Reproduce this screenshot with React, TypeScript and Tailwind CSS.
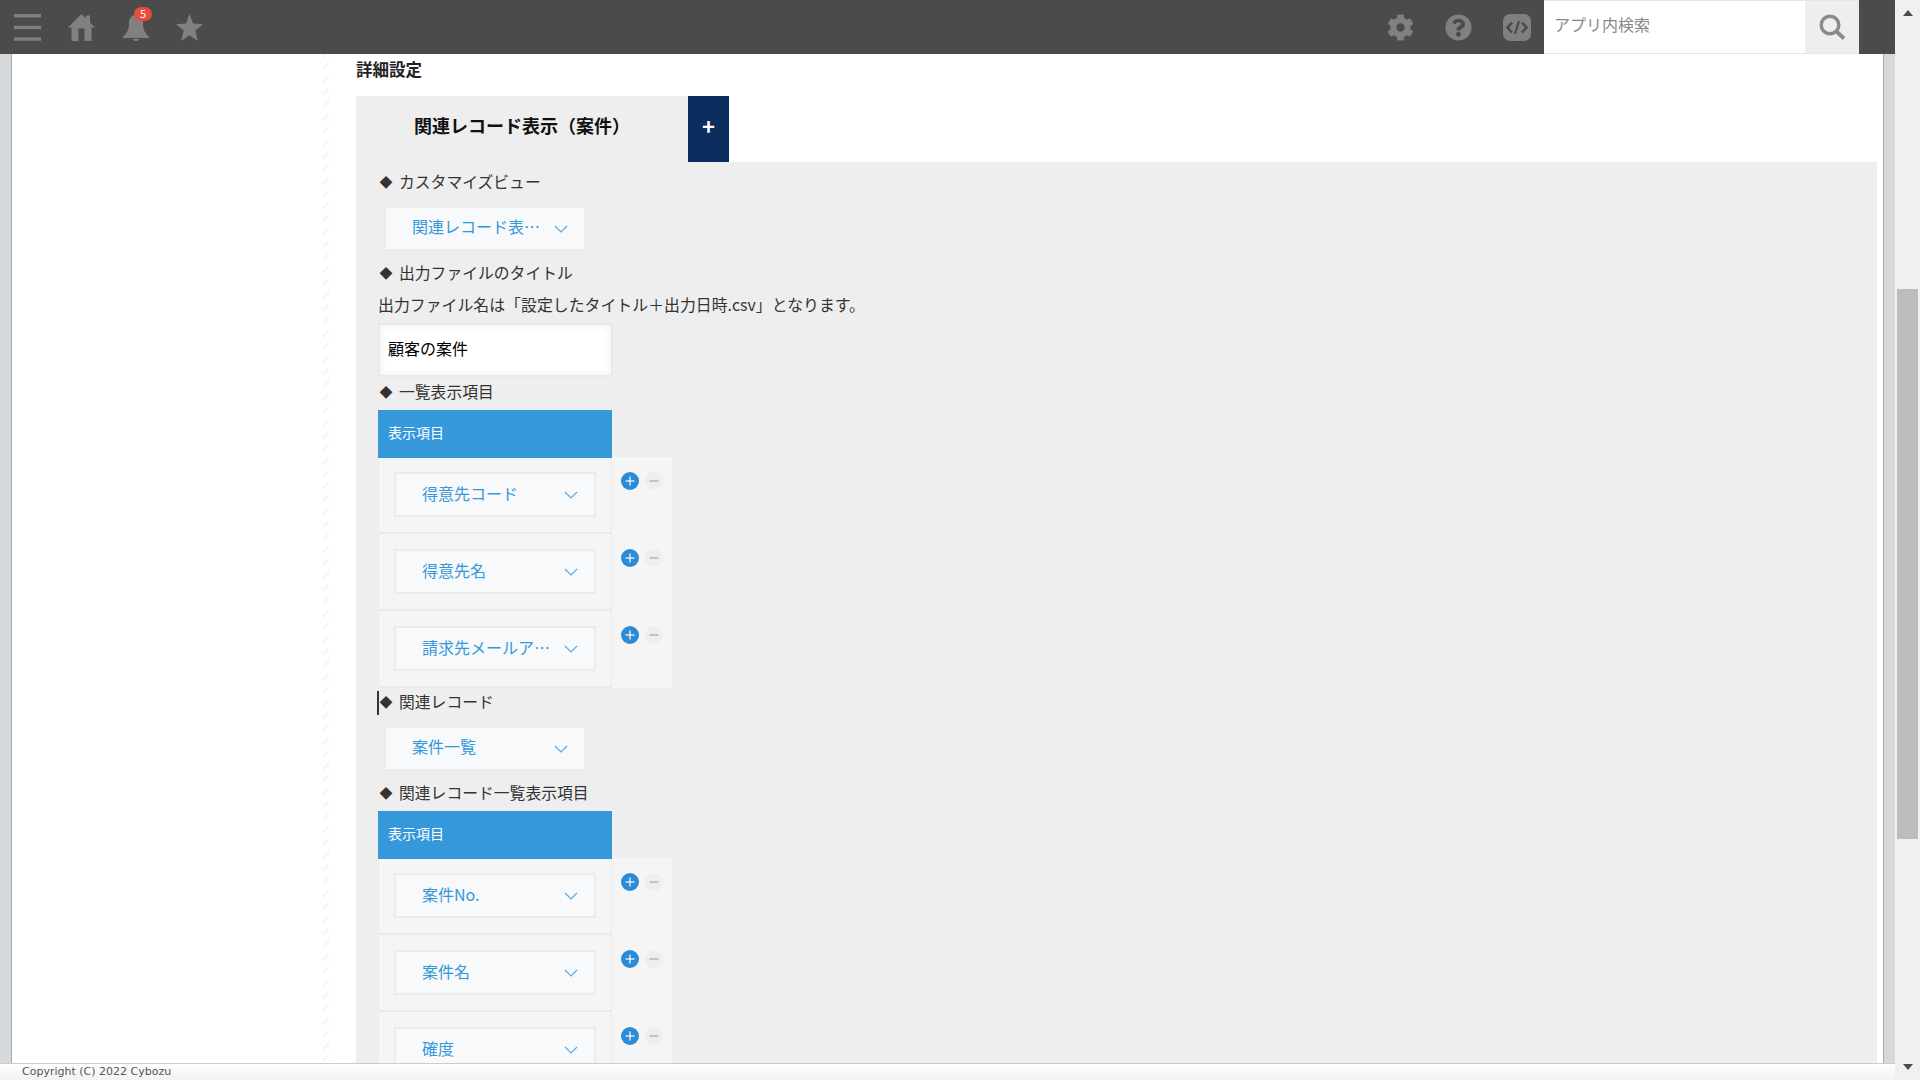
import { FaCog, FaQuestionCircle } from 'react-icons/fa'

const JP = "font-['Noto_Sans_CJK_JP','Noto_Sans',sans-serif]"

function Chevron() {
  return (
    <svg width="14" height="8" viewBox="0 0 14 8" fill="none" className="shrink-0">
      <polyline points="1,1 7,7 13,1" stroke="#5aaae0" strokeWidth="1.2" />
    </svg>
  )
}

function SelectBox({ label, height = 'h-[45px]', textPad = 'pb-[3px]' }: { label: string; height?: string; textPad?: string }) {
  return (
    <div className={`flex ${height} w-[202px] items-center justify-between border-2 border-[#eaeced] bg-[#f7f9fa] pl-[26px] pr-[16px] text-[16px] text-[#3498db]`}>
      <span className={`whitespace-nowrap ${textPad}`}>{label}</span>
      <Chevron />
    </div>
  )
}

function SectionLabel({ text, caret }: { text: string; caret?: boolean }) {
  return (
    <div className="relative flex h-[28px] items-center pb-px text-[15.8px] text-[#333]">
      {caret && <span className="absolute -left-px top-[3px] h-[24px] w-[2px] bg-[#333]" />}
      <span className="mr-[5px] w-[16px] text-center text-[13px]">◆</span>
      <span>{text}</span>
    </div>
  )
}

function RoundButton({ kind }: { kind: 'plus' | 'minus' }) {
  const plus = kind === 'plus'
  return (
    <div className={`flex h-[18px] w-[18px] items-center justify-center rounded-full ${plus ? 'bg-[#2b8bd6]' : 'bg-[#eeeeee]'}`}>
      <svg width="10" height="10" viewBox="0 0 10 10">
        <rect x="0.5" y="4.4" width="9" height="1.2" fill={plus ? '#ffffff' : '#a8a8a8'} />
        {plus && <rect x="4.4" y="0.5" width="1.2" height="9" fill="#ffffff" />}
      </svg>
    </div>
  )
}

function FieldTable({ rows }: { rows: string[] }) {
  return (
    <div className="mt-1">
      <div className="relative z-10 flex h-[48px] w-[234px] items-center bg-[#3498db] pb-[3px] pl-[10px] text-[14px] text-white">
        表示項目
      </div>
      <div className="-mt-px flex w-[294px]">
        <div className="w-[234px]">
          {rows.map((row) => (
            <div key={row} className="h-[77px] border-x border-b-2 border-[#e9eaea] bg-[#f5f5f5] pl-[15px] pt-[15px]">
              <SelectBox label={row} />
            </div>
          ))}
        </div>
        <div className="w-[60px] bg-[#f5f5f5]">
          {rows.map((row) => (
            <div key={row} className="flex h-[77px] gap-[6px] pl-[9px] pt-[15px]">
              <RoundButton kind="plus" />
              <RoundButton kind="minus" />
            </div>
          ))}
        </div>
      </div>
    </div>
  )
}

function Header() {
  return (
    <header className="flex h-[54px] shrink-0 items-center bg-[#4b4b4b] text-[#808080]">
      <svg width="27" height="27" viewBox="0 0 27 27" className="ml-[14px]" fill="#808080">
        <rect x="0" y="0" width="27" height="3.4" />
        <rect x="0" y="11.8" width="27" height="3.4" />
        <rect x="0" y="23.4" width="27" height="3.4" />
      </svg>
      <svg width="27" height="27" viewBox="0 0 27 27" className="ml-[27px]" fill="#808080">
        <path d="M13.5 0 L18 4.5 V1.5 H22 V8.5 L27 13.5 H23.5 V27 H16.5 V14.5 H10.5 V27 H3.5 V13.5 H0 Z" />
      </svg>
      <div className="relative ml-[28px] h-[27px] w-[26px]">
        <svg width="26" height="27" viewBox="0 0 26 27" fill="#808080">
          <path d="M13 1 C17.5 1 20 4.5 20 9 C20 15 21.5 19 26 22.5 V24 H0 V22.5 C4.5 19 6 15 6 9 C6 4.5 8.500 1 13 1 Z" />
          <path d="M9.500 25 H16.500 C15.500 26.500 14.500 27 13 27 C11.500 27 10.500 26.500 9.500 25 Z" />
        </svg>
        <span className="absolute left-[11px] top-[-7px] flex h-[14px] w-[18px] items-center justify-center rounded-full bg-[#e74c3c] text-[11px] leading-none text-white">
          5
        </span>
      </div>
      <svg width="27" height="27" viewBox="0 0 27 27" className="ml-[27px]" fill="#808080">
        <polygon points="13.5,0 17,9.600 27,10.300 19.300,16.600 21.800,27 13.500,21.300 5.200,27 7.700,16.600 0,10.300 10,9.600" />
      </svg>

      <div className="flex-1" />

      <FaCog size={27} color="#808080" />
      <FaQuestionCircle size={27} color="#808080" className="ml-[31px]" />
      <svg width="28" height="27" viewBox="0 0 28 27" className="ml-[31px]" fill="none">
        <rect width="28" height="27" rx="7" fill="#808080" />
        <polyline points="9,8.500 4.500,13.500 9,18.500" stroke="#4b4b4b" strokeWidth="2.600" />
        <polyline points="19,8.500 23.500,13.500 19,18.500" stroke="#4b4b4b" strokeWidth="2.600" />
        <line x1="16" y1="7" x2="12" y2="20" stroke="#4b4b4b" strokeWidth="2.200" />
      </svg>

      <div className="ml-[13px] flex h-[54px] w-[261px] items-center border-y border-[#e3e7e8] bg-white pb-[6px] pl-[10px] text-[16px] text-[#888]">
        アプリ内検索
      </div>
      <div className="flex h-[54px] w-[54px] items-center justify-center border-y border-[#e3e7e8] bg-[#eeeeee]">
        <svg width="27" height="26" viewBox="0 0 27 26" fill="none">
          <circle cx="11" cy="11" r="8.800" stroke="#8a8a8a" strokeWidth="3.400" />
          <line x1="17.500" y1="17.500" x2="25" y2="24.500" stroke="#8a8a8a" strokeWidth="3.800" />
        </svg>
      </div>
      <div className="w-[36px]" />
    </header>
  )
}

function Scrollbar() {
  return (
    <div className="flex h-full w-[25px] shrink-0 flex-col items-center bg-[#f0f0f0]">
      <div className="mt-[10px] h-0 w-0 border-x-[5.5px] border-b-[6px] border-x-transparent border-b-[#4b4b4b]" />
      <div className="mt-[273px] h-[550px] w-[21px] bg-[#bdbdbd]" />
      <div className="mt-[225px] h-0 w-0 border-x-[5.5px] border-t-[6px] border-x-transparent border-t-[#4b4b4b]" />
    </div>
  )
}

export default function App() {
  return (
    <div lang="ja" className={`flex h-[1080px] w-[1920px] overflow-hidden bg-white ${JP}`}>
      <div className="flex min-w-0 flex-1 flex-col">
        <Header />

        <div className="flex min-h-0 flex-1">
          <div className="w-[12px] shrink-0 border-r border-[#a9a9a9] bg-[#d6d9db]" />
          <div className="w-[311px] shrink-0 bg-white" />
          <div className="w-[6px] shrink-0 bg-[repeating-linear-gradient(135deg,#f7f7f7_0,#f7f7f7_3px,#ffffff_3px,#ffffff_9px)]" />
          <div className="w-[27px] shrink-0 bg-white" />

          <main className="min-w-0 flex-1 overflow-hidden">
            <h2 className="h-[42px] pt-[3px] text-[16.5px] font-bold leading-[24px] text-[#222]">詳細設定</h2>

            <div className="flex h-[66px]">
              <div className="flex w-[332px] items-center bg-[#eeeeee] pb-[7px] pl-[58px] text-[18px] font-bold text-[#111]">
                関連レコード表示（案件）
              </div>
              <div className="flex w-[41px] items-center justify-center bg-[#0a2c5f] pb-[7px] text-[22px] font-bold text-white">
                +
              </div>
            </div>

            <div className="h-[1000px] bg-[#eeeeee] pl-[22px] pt-[6px]">
              <SectionLabel text="カスタマイズビュー" />
              <div className="ml-[6px] mt-[10px]">
                <SelectBox label="関連レコード表…" height="h-[45px]" textPad="pb-[5px]" />
              </div>

              <div className="mt-2">
                <SectionLabel text="出力ファイルのタイトル" />
              </div>
              <p className="mt-1 h-[28px] text-[15.9px] leading-[27px] text-[#333]">
                出力ファイル名は「設定したタイトル＋出力日時.csv」となります。
              </p>
              <div className="mt-1 flex h-[54px] w-[235px] items-center border-2 border-[#e8e8e8] bg-white pb-[4px] pl-[8px] text-[16px] text-black shadow-[inset_0_0_10px_rgba(0,0,0,0.06)]">
                顧客の案件
              </div>

              <div className="mt-px">
                <SectionLabel text="一覧表示項目" />
              </div>
              <FieldTable rows={['得意先コード', '得意先名', '請求先メールア…']} />

              <SectionLabel text="関連レコード" caret />
              <div className="ml-[6px] mt-[10px]">
                <SelectBox label="案件一覧" textPad="pb-[5px]" />
              </div>

              <div className="mt-2">
                <SectionLabel text="関連レコード一覧表示項目" />
              </div>
              <FieldTable rows={['案件No.', '案件名', '確度']} />
            </div>
          </main>

          <div className="w-[6px] shrink-0 bg-white" />
          <div className="w-[12px] shrink-0 border-l border-[#a9a9a9] bg-[#d6d9db]" />
        </div>

        <footer className="flex h-[17px] shrink-0 items-center border-t border-[#cccccc] bg-gradient-to-b from-white to-[#f2f2f2] pl-[22px] pt-px font-['DejaVu_Sans',sans-serif] text-[11px] text-[#555]">
          Copyright (C) 2022 Cybozu
        </footer>
      </div>
      <Scrollbar />
    </div>
  )
}
